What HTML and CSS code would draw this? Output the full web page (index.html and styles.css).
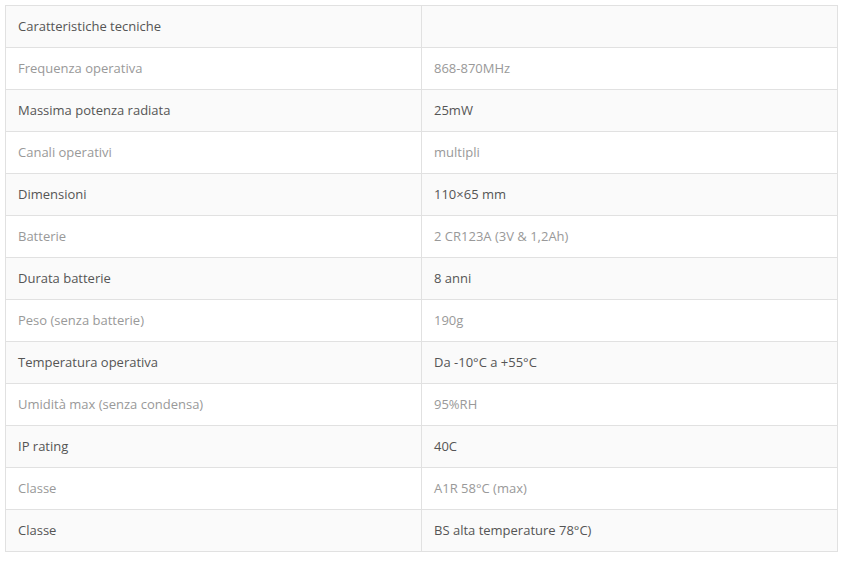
FILE: index.html
```html
<!DOCTYPE html>
<html lang="it">
<head>
<meta charset="utf-8">
<link rel="stylesheet" href="styles.css">
</head>
<body>
<table class="specs">
<tbody>
<tr><td>Caratteristiche tecniche</td><td></td></tr>
<tr><td>Frequenza operativa</td><td>868-870MHz</td></tr>
<tr><td>Massima potenza radiata</td><td>25mW</td></tr>
<tr><td>Canali operativi</td><td>multipli</td></tr>
<tr><td>Dimensioni</td><td>110×65 mm</td></tr>
<tr><td>Batterie</td><td>2 CR123A (3V &amp; 1,2Ah)</td></tr>
<tr><td>Durata batterie</td><td>8 anni</td></tr>
<tr><td>Peso (senza batterie)</td><td>190g</td></tr>
<tr><td>Temperatura operativa</td><td>Da -10°C a +55°C</td></tr>
<tr><td>Umidità max (senza condensa)</td><td>95%RH</td></tr>
<tr><td>IP rating</td><td>40C</td></tr>
<tr><td>Classe</td><td>A1R 58°C (max)</td></tr>
<tr><td>Classe</td><td>BS alta temperature 78°C)</td></tr>
</tbody>
</table>
</body>
</html>
```
FILE: styles.css
```css
html, body {
  margin: 0;
  padding: 0;
  background: #fff;
}
body {
  padding: 5px;
  font-family: "Open Sans", "Liberation Sans", sans-serif;
  font-size: 13px;
}
.specs {
  width: 833px;
  border-collapse: collapse;
  table-layout: fixed;
}
.specs td {
  border: 1px solid #e1e1e1;
  padding: 10px 12px;
  line-height: 21px;
  height: 21px;
  vertical-align: middle;
  color: #999;
  text-align: left;
}
.specs td:first-child {
  width: 391px;
}
.specs tr:nth-child(odd) td {
  background: #fafafa;
  color: #555;
}
```
